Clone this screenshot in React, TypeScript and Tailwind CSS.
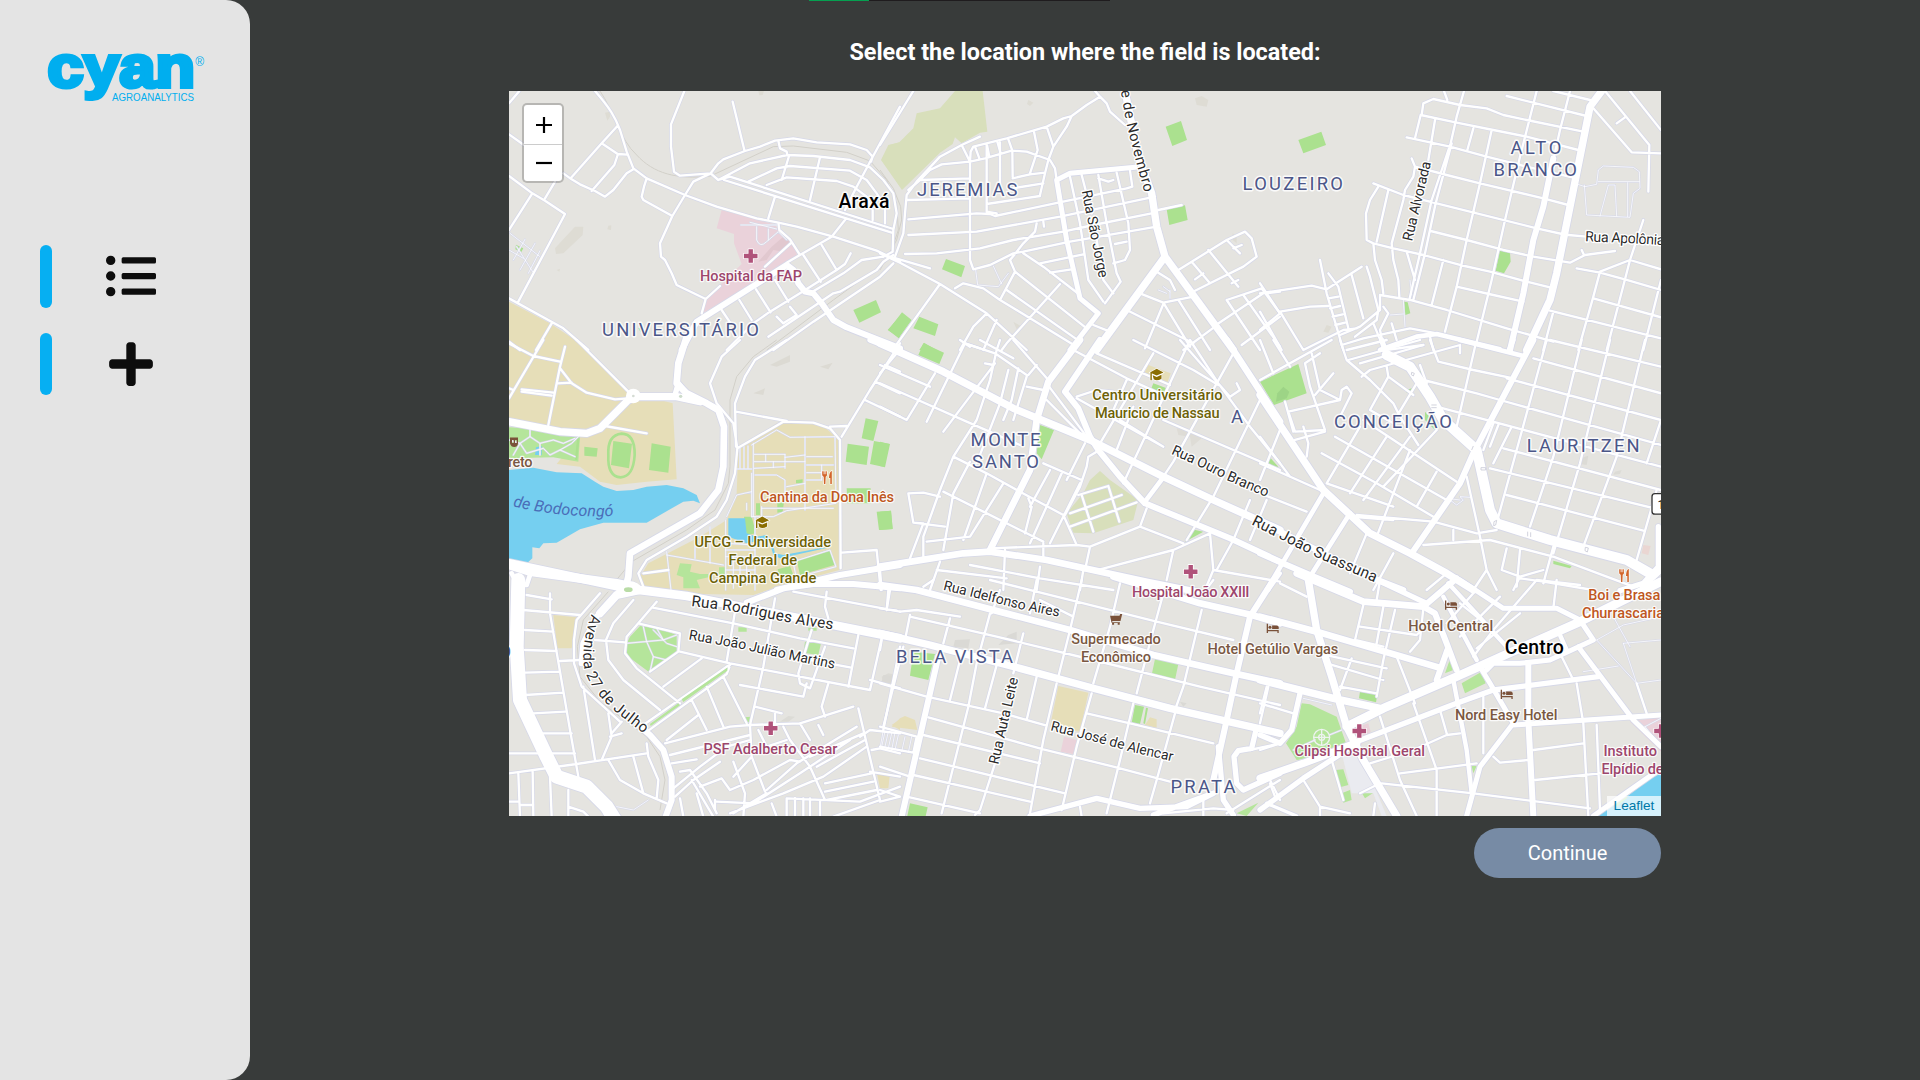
import { useId } from "react";
import { FaListUl, FaPlus } from "react-icons/fa";

type Tile = {
  x: number;
  y: number;
  areas?: [string, string][];
  rail?: string;
  service?: string;
  minor: string;
  roads: [number, string][];
};

const GREEN = "#abe18f";
const PARK = "#b5e59b";
const SAND = "#e6deb8";
const PINK = "#ead2da";
const WATER = "#75cff0";
const OLIVE = "#d8dfbb";

// Each tile covers a 400px wide part of the map and is authored at three units per pixel.
const TILES: Tile[] = [
  {
    x: 500,
    y: 80,
    areas: [
      [PINK, "M665 390L820 432L870 480L890 510V535L860 550L608 700L617 657L725 552L702 490V462L650 445Z"],
      ["#e1c8cf", "M850 470L868 485L850 515L820 510L800 540L775 545L815 500Z"],
      ["#dedcd4", "M250 440L248 465L190 520L168 522L165 505L225 440ZM325 437L334 436L333 450L322 448ZM315 98L330 95V110L322 122ZM775 33H792L788 45L778 46ZM170 570L180 566L178 575Z"],
      [OLIVE, "M1200 187L1165 195L1143 240L1200 320Z"],
      [GREEN, "M1060 690L1128 660L1143 697L1078 728ZM1200 708L1163 750L1200 775ZM48 494L70 505L64 516L46 508ZM415 745L425 742L422 757Z"],
    ],
    rail: "M300 33C340 90 360 180 410 225C460 280 530 300 632 288L820 200L880 198L1040 217L1110 243L1160 300L1190 370L1195 450L1165 540L1000 660L800 810",
    service:
      "M30 460L120 530M50 500L98 575M40 540L75 478M60 570L105 490M85 580L120 512M27 510L70 535M722 435H830M750 427L830 447M770 440V480Q780 505 800 485L835 455L860 480M805 447V480",
    minor:
      "M27 70L58 33M27 163L72 195M285 33C330 85 345 110 360 150L380 215L400 265L440 295L555 345L650 380L770 415L835 428L890 440L1000 470L1130 512L1200 545M353 137L305 190L212 295M190 280L215 298L240 313L285 333L315 350L340 330L380 280L400 268M305 190L353 222L382 224M353 225L343 255L275 333M165 305L135 355M27 288L97 340L135 362L195 402L55 665M97 340L27 450M27 655L190 745L265 810M440 295L432 320L425 350L430 360L517 408M553 33L513 133V200L522 275L540 287L632 280L655 250L670 238L735 213L780 200L825 182L880 175L950 187L1050 193L1100 210L1118 230L1113 245M698 65L733 210M835 182L840 205L860 215L862 225L940 228L1050 240L1110 262L1150 300L1180 340L1190 400L1180 450L1178 515L1150 530M632 280L655 300L750 250L862 225M632 280L580 305L555 345L517 408L480 490L483 530L495 540L515 580L530 615L617 657L605 700M655 300L690 290L1180 447M672 300L1175 458M745 305L830 265L870 258L1050 272L1100 300L1130 340L1155 380V430M800 315L860 292L1010 303L1060 320L1100 350L1118 390V420M868 225L845 300M825 350L805 415M960 232L930 360M1200 80L1113 240L1065 330L1035 390M1035 420L995 470L905 522L860 548M835 428L838 450L870 478L900 525M795 560L875 487M617 657L660 618M665 690L690 727M718 660L755 720M768 628L812 697M825 600L865 665M910 525L962 605M965 495L1010 570M1052 520L1035 552L1010 570L900 640L810 695L760 730L680 810M830 710L850 730L890 705L870 680M805 770L1000 640L1020 635L1130 570L1150 545L1180 525M820 810L940 725L1140 590L1180 550M930 640L1030 580L1085 540L1150 530M155 730L108 810M27 785L60 810",
    roads: [
      [18, "M545 810L590 725L860 555L880 570L895 610L915 635L940 640L965 670L1000 720L1040 742L1200 805"],
    ],
  },
  {
    x: 880,
    y: 80,
    areas: [
      [OLIVE, "M225 33H308L322 155L300 158L245 190L225 172L218 192L180 218L66 330L5 240L30 195L58 187L100 145L110 100L180 85Z"],
      ["#dedcd4", "M945 55L965 48L985 60L980 80L950 75ZM445 60L460 68L450 78L441 72ZM400 725L422 738L410 748ZM1058 460L1070 470V490L1058 480Z"],
      [GREEN, "M857 140L903 123L921 180L877 198ZM860 388L915 376L923 420L868 435ZM198 537L255 558L244 592L186 568ZM66 697L95 720L56 775L25 750ZM118 710L175 733L165 768L100 745ZM132 788L170 810H118Z"],
    ],
    rail: "M0 270L40 325L62 380L65 420L50 480L0 570",
    service: "M287 570L293 615L355 620L385 580M340 558L365 612M850 620L870 635M835 630L860 640M870 630V655",
    minor:
      "M0 195L100 33M300 170L245 195L180 230L110 305L80 345L75 400L70 460L45 530M85 330L120 300L150 270L185 253L270 245L315 235L395 212L440 215L510 240L525 265L530 300M270 245L272 215L280 200L380 175L500 140L550 115L575 108L620 75L660 50L645 33M660 50L680 70L690 95L735 135M575 108L560 140L520 200L505 240L495 280L480 345M245 195L270 245V540L280 568L330 555L400 520L430 515L570 485L830 440M500 140L520 200M462 155L473 210L450 280M397 212L398 290M360 187V325M320 190V395L350 400M285 200L298 235M320 190L328 230M352 185L362 220M385 178L397 212M120 300L270 295M398 295L450 283L495 278M398 325L490 310M320 372L480 348M80 360L270 355M85 418L290 400L330 402L345 408L535 368L740 325M85 465L290 455L540 410L825 350M75 522L170 520L300 505L400 480L550 455L640 435L830 397M470 430L465 455L430 490L405 522L390 540L405 575L360 660M490 425L492 440M480 550L610 523M510 578L575 568M430 520L490 560L600 645M570 290L600 430L625 600L670 665M605 285L635 400M650 480L670 600L700 640M655 285L680 430L710 580L722 605L675 670M710 278L745 430L750 510L735 540L700 550M750 272L757 320L740 325M655 295L685 305L700 300M705 492L740 485M835 390L905 375M30 530L150 565M0 520L60 548L180 612L320 700L440 810M180 612L45 800M225 625L250 610L310 625L360 660L590 800M380 630L600 785M405 575L620 745M540 612L380 790L365 810M320 700L280 740L240 810M350 720L310 810M255 790L300 805M640 735L690 755M740 690L940 790M780 640L850 668L940 650M850 672L795 805M850 668L930 800M895 660L990 810M1005 740L910 810M830 575L870 600L885 630M895 570L1040 480L1095 455L1115 475L1130 530L1090 560L990 610L930 640M985 510L1075 620M1040 480L1080 520M935 545L990 610M1060 505L1085 495M945 598L970 580M1055 610L1075 600M1040 660L1145 625L1200 700M1090 645L1200 800M1000 740L1150 640M1085 795L1200 710M1160 640L1200 635M1040 660L1140 810",
    roads: [
      [15, "M765 262L570 280L530 300L560 480L600 655L655 700L570 810"],
      [22, "M735 33L775 230L815 340L830 440L855 530L1060 810M855 530L650 810"],
      [18, "M0 785L60 810"],
    ],
  },
  {
    x: 1260,
    y: 80,
    areas: [
      [GREEN, "M115 180L184 155L198 195L130 220ZM720 510L750 518L752 545L732 580L707 572ZM432 665L443 667L451 700L436 705Z"],
      ["#dedcd4", "M200 735L215 740L205 758L190 755Z"],
    ],
    service:
      "M950 312L975 320L1010 313L1015 270L1030 258L1120 262L1138 275L1140 325L1120 340L1110 412L980 405L973 315M1015 305H1138M1020 408L1045 315H1065L1070 408M1103 308V410M430 660L435 740M390 705L430 702M455 645L450 600",
    minor:
      "M830 33L780 230L735 420L695 600L650 785M930 33L900 150L880 240M695 150L660 310L620 480L590 620L555 755M612 33L590 110L572 190L515 360L480 520L448 660M575 190L527 370L495 520L460 660M640 145L622 210M525 120L505 240M550 540L515 675M455 235L465 260L460 290L435 330L430 360L395 490L400 540L415 600L418 650M385 330L350 485M340 310L430 345L530 370L830 445L920 465M355 320L330 360L318 400L320 480L340 490L400 505L490 525L600 555L690 575L800 605L870 622M340 490L345 540L365 600L370 640M440 515L465 600M360 645L450 660L560 690L740 745L880 785M485 105L490 70L520 57L600 75L680 85L730 105L800 120L970 155M482 105L465 175M482 105L590 128L700 150L800 170L955 210M440 172L570 200L680 230L800 260L950 295M465 260L560 285L660 310L850 355L925 375M552 33L562 60M740 48L980 108M880 33L990 60M512 453L620 480L730 510L820 530L930 548L975 525L1065 513M965 510L972 525M590 620L700 645L790 665M925 465L980 470M1000 85L1115 217L1203 220M1035 33L1168 195L1165 335M1070 130L1095 112M1110 33L1203 150M1150 420L1110 540L1020 575M950 565L1020 578L1100 600L1203 630M1020 575L1000 650L955 810M1110 540L1203 568M1110 540L1040 810M1000 655L1203 712M1203 600L1150 810M870 692L1203 775M880 695L850 810M0 640L155 617L200 628L305 560M205 580L235 620L265 745M180 540L200 640L250 810M275 585L310 715M320 560L330 590L355 690L350 720M205 655L235 650M210 685L240 678M218 710L248 703M226 735L255 728M240 765L300 740L360 690V645M285 770L350 720M245 795L310 775L450 745L530 760M130 810L250 750L290 745M60 695L150 680L205 678M0 750L60 700L0 610M60 695L130 810M0 695L65 810M370 680L385 700L360 750L370 800M395 730L410 780M340 730L365 790M510 770L520 810M365 812L490 795",
    roads: [
      [22, "M1025 33L990 80L960 230L910 480L890 580L870 660L800 810"],
      [18, "M880 235L850 380L820 480L790 640L750 810"],
      [14, "M360 810L470 770L530 762L720 808"],
    ],
  },
  {
    x: 500,
    y: 340,
    areas: [
      [SAND, "M27 -115L150 -50L225 0L385 155L518 190L530 418L440 425L350 435L300 425L240 380L170 372L235 290L27 240Z"],
      [SAND, "M715 325L830 250H960L1018 300L1020 500L1018 690L850 735L760 765L600 762L430 750L420 710L445 670L600 590L680 540L710 460Z"],
      [PARK, "M27 262L90 265L240 290L235 365L160 352L27 355Z"],
      [GREEN, "M340 303L396 311L387 385L333 375ZM455 310L512 320L505 398L447 390ZM253 320L293 325L290 350L253 347ZM1097 235L1135 243L1120 303L1085 295ZM1043 311L1107 320L1100 375L1037 365ZM1122 303L1170 312L1155 382L1110 372ZM1040 445H1112V490H1042ZM1130 515L1173 512L1178 567L1137 570ZM890 660L990 628L1003 675L900 705ZM833 688L870 678L880 705L840 717ZM732 530H755L768 580L740 585ZM768 490H780V525H768ZM832 488L852 485L848 515L832 518ZM888 420L908 418V430H888Z"],
      [PARK, "M540 670L575 673L570 695L600 702H625V712L590 720L600 745H550V712L530 705ZM657 682H675V712H657Z"],
      ["#dcdad3", "M810 75L870 45L870 65L830 80ZM960 80L998 68L985 88ZM760 160L795 145L790 165Z"],
      [WATER, "M27 390L100 383L170 397L245 400L285 425L310 440L350 453L400 450L440 440L500 435L550 445L590 465L600 490L580 482L550 485L440 548H310L240 568L170 608L130 610L118 625L97 622V655L75 675L27 660ZM685 535H735L740 580L770 590L800 585L815 600L825 640L850 645L960 625L990 622L840 655L820 645L810 610L790 600L740 610L685 590ZM108 322L125 318V345H105Z"],
    ],
    rail: "M830 0L760 50L710 110L690 180L690 380L685 430L645 510L560 570L395 665L345 725",
    service:
      "M755 315L830 270L870 292L1005 290L1008 490L860 512L820 530H755M760 310V530M915 290V510M763 343H855M763 365H915M763 385L855 380M855 343V385M797 343V365M820 365V383M855 352L915 345M920 350H997M920 375H1000M920 398H965M920 420H965M965 375V420M765 405H830L855 420V470H910M860 440L915 430M720 325V385M732 320V385M744 318V385M710 387H755M755 400V530M755 455L710 465L680 530M785 500V530M785 505H1000M677 540V750M677 630H765M677 650H765M765 530V750M677 610L765 615M630 560V670M585 590V655M500 635L513 750M500 645L670 675M880 665L990 630L1008 680L890 712ZM700 650V745M720 650V740M740 650V735M740 490V510M677 690H765M677 715H765M27 300L60 310L90 290L120 310L160 300L190 310L225 295M60 310L80 340L130 325L150 345L180 330L225 350M90 265V290M120 310V345M40 345L60 310M180 330L215 310L235 290",
    minor:
      "M230 0L385 155M130 0L27 175M27 10L100 48L180 65M195 20L180 80L145 255M180 85L215 130L260 158L345 178L385 175M172 130L215 128M65 148L160 158M65 155L155 167M27 145L40 150M315 258L440 280M720 0L665 50L630 130L650 190L700 250L712 325L705 400L680 480L650 530L560 590L440 660L415 700L430 740M860 0L765 60L735 110L705 190L708 320M708 215L860 243M712 325L850 245L940 248L990 265L1020 300L1022 685M990 260L1040 258M1200 10L1110 150L1025 290M1155 75L1200 95M1125 125L1200 160M1095 180L1200 230M1025 638L1130 630L1142 750M430 700L505 690",
    roads: [
      [20, "M560 -10L535 70L530 130L560 160L620 190L655 210L672 260L670 380L655 450L600 520L390 640L385 710L375 750"],
      [22, "M600 185L530 170L410 170L385 180L345 220L300 265L260 280L180 275L27 245"],
      [26, "M27 675L90 695L350 730L400 740"],
      [16, "M1110 0L1200 35M525 165L535 130L560 160"],
      [14, "M35 700L50 730L80 735L90 705"],
    ],
  },
  {
    x: 880,
    y: 340,
    areas: [
      [OLIVE, "M630 420L660 393L690 420L775 480L760 540L640 580L580 578L560 520L610 460Z"],
      [SAND, "M805 75L872 100L860 135L790 105Z"],
      [GREEN, "M130 10L192 38L178 72L115 45ZM480 255L522 270L485 358L470 340ZM0 305L28 312L12 380L0 378ZM820 130L860 145L850 165L810 155ZM935 568L970 575L915 605ZM0 515L33 512L38 567L0 570ZM1172 355L1195 380L1168 372Z"],
      ["#dedcd6", "M890 265L930 270L965 295L935 320L930 290L895 285Z"],
    ],
    minor:
      "M50 40L0 100M255 10L140 245M345 70L190 275M350 30L330 120L290 240L220 350L180 450L130 590V650M385 90L360 190L290 370M415 85L395 180L370 240M440 110L400 240M445 105L470 75M440 140L490 150M255 10L345 40L440 105M350 30L360 0M300 0L400 55M400 0L505 120M0 75L150 140M0 130L80 165L260 245L420 315M0 200L80 240L165 100M315 70L340 75M500 130L620 290M500 180L600 280M220 350L320 400L420 455L550 525M190 455L310 515L440 580L490 605M320 400L250 600M270 365L220 460L190 630M370 430L270 590L140 605M85 460L100 548L195 560M85 460L130 458L180 470M100 548L130 550L90 655M445 475L455 500L435 580M510 390L450 500M545 400L450 610M600 430L510 610M550 525L590 615L330 625M615 310L560 420M650 335L625 350L620 380L600 440L555 525M490 370L605 420M590 615L630 620L780 560L800 505M780 560L910 610M630 620L615 690M490 610V650M375 630L370 750M655 690L880 630L990 580L1000 690L975 750M880 630L860 720M1000 690L1200 725M595 465L685 438L718 545M605 465L640 575M570 520L725 465M570 560L770 487M580 30L740 115L860 170M650 40L870 135M760 0L940 90L1015 135M820 40L660 310M740 120L700 210M590 175L850 320M930 0L800 280L730 430M1060 40L880 365L850 410M1140 180L1000 470L920 600M850 240L1200 390M930 0L1015 130L1110 260L1200 370M900 0L1050 170L1080 150L1070 130M720 240L850 320M760 200L710 330M590 170L650 150L700 155M1110 480L1060 600L1010 690M1160 480L1110 600M240 0L270 20M270 675L480 715L700 750M180 665L150 750M480 680L470 750M610 690L600 750M0 690L5 750M170 690L380 715",
    roads: [
      [22, "M0 10L190 95L400 205L630 300L850 410L1000 480L1200 570"],
      [20, "M600 0L505 125L470 240L450 390L330 630"],
      [18, "M660 0L555 155L595 205L630 290L655 330L720 410L795 490L1050 595L1200 665"],
      [20, "M1040 0L1200 245"],
      [14, "M795 485L850 412"],
      [20, "M0 680L250 640L330 635L500 660L800 725L950 755"],
      [12, "M1200 700L1165 750"],
    ],
  },
  {
    x: 1260,
    y: 340,
    areas: [
      [GREEN, "M0 125L115 72L140 160L42 195ZM28 355L55 382L25 375ZM495 215L530 255L525 270L495 240ZM880 662L935 678L930 685L880 672ZM440 150L455 145L458 158L440 158ZM480 90L495 110L480 108Z"],
      ["#9dd486", "M70 140L88 155L80 175L48 185L52 160Z"],
      ["#ead6d2", "M1150 615L1172 618L1165 645L1145 640Z"],
      ["#dcdbd6", "M960 355L985 347L980 375L960 372ZM1065 395L1085 390L1080 402L1060 404Z"],
    ],
    service: "M570 480L590 495L610 480L600 470L630 472M560 475L600 480",
    minor:
      "M870 0L1203 80M820 55L1203 160M740 115L1203 240M720 180L1203 315M530 200L1203 380M730 325L1203 450M690 385L1203 510M740 465L1150 572M860 0L770 330L715 530M965 0L880 350L810 560M1050 0L960 370L880 640M1155 0L1070 350L970 620M1203 240L1160 370M1190 450L1130 660M645 20L590 260M490 120L650 160L720 180M510 0L535 65L640 90L760 115M240 0L260 60L330 120L400 190L420 230L475 315M260 30L380 0M265 60L480 0M300 70L490 15M305 110L330 90L600 15V40M380 80L385 110L460 165M385 110L330 210M470 130L410 230M480 75L500 130M180 40L135 70L150 140L195 270L105 275L85 215L240 180L245 150L260 140L275 160L240 230M155 40L180 150L240 180M220 100L165 165M75 185L100 275M105 300L195 275M130 260L145 310L140 350M0 120L215 0M60 270L0 420M0 370L180 450M0 290L90 410M185 340L350 430L520 530M225 290L560 480M330 210L400 250M310 240L590 425M200 430L400 500M300 260L200 430M380 290L270 460M450 290L310 480M530 270L370 440M530 395L470 500M450 330L350 590M620 410L660 590L680 690L640 750M680 690L710 750M290 525L520 545L650 580L710 570M270 530L400 540M490 615L690 600L880 650L1120 740M580 570V600M740 625L725 690L780 710L760 750M880 620L850 730M780 630L770 740M700 250L670 330M715 255L690 320M755 260L700 370M780 715L850 725L1000 750M400 640L340 750M320 580L270 700M0 460L140 515M560 700L500 750M40 0L90 80M0 0L40 100M780 710L850 690",
    roads: [
      [22, "M0 165L190 450L330 580L450 640L560 700L640 750"],
      [18, "M820 0L640 340L600 430L455 640"],
      [30, "M380 45L450 80L510 170L550 240L650 330L690 510L710 550L870 600L1100 660L1170 700"],
      [16, "M365 0L380 45M1195 560V680L1150 730L1080 752M1203 690L1150 740"],
      [14, "M600 0L790 48M760 0L745 35M190 460L20 750M270 520L150 710V750"],
      [18, "M-30 530L340 715L430 750M0 640L150 705L270 755"],
    ],
  },
  {
    x: 500,
    y: 580,
    areas: [
      [SAND, "M160 105L230 112L215 205L172 205ZM1130 575L1170 580L1160 625L1140 625ZM1175 435L1200 418V450Z"],
      [PARK, "M420 138L475 145L530 165V215L450 278L385 230L375 200L390 170ZM915 185L963 190L955 225L910 218ZM715 142H740V155H715ZM735 412L752 410L745 430L732 428ZM925 143L950 143V152H925Z"],
      ["#dcdbd6", "M1145 290L1165 280L1190 285V308H1150ZM840 425L865 408L885 410L865 425Z"],
    ],
    rail: "M325 35L250 120L232 200L240 290L300 365L440 470L480 530L495 600L480 690",
    service:
      "M380 190L490 180L530 165M430 140L440 185L460 230L450 275M460 150L500 190L530 200M490 180L470 145M460 230L500 240M350 680L400 690L445 660M1150 450L1140 505M1165 455L1155 500M1185 458L1175 510",
    minor:
      "M75 150L160 155M70 90L240 105M80 45L155 58M150 40V100L210 450L235 590M75 210L170 213M75 278L180 275M75 345L190 338M100 400L195 395M120 460H215M27 520H225M27 580L230 552L440 520M55 580L60 710M98 575L100 710M150 590L155 710M27 665H55M60 675H100M205 630V710M205 680L250 695L265 710M180 243L240 240M250 320L285 540M325 400L335 470L305 540M335 460L365 425M330 470L365 460M300 40L230 120L222 180V250L245 320L360 425M400 60L340 130L318 180L325 240L370 300L480 390M470 65L380 170L375 220L410 265L540 370M285 180L375 187M455 82L700 130L900 175L1060 205M415 130L540 160L535 215L450 275M540 215L690 250L1110 330L1145 175M605 235L490 320M690 255L680 260L430 435M688 262L680 282L445 452M670 290L740 430M620 320L670 440M575 360L620 450M595 405L500 480M495 490L690 440L750 435L900 430L1060 380M825 55L790 260L750 435L755 530L795 635M705 95L680 245M720 315L910 350L920 310M1075 165L1045 320M935 150L895 280L900 310L930 325L975 200M980 35L975 80L985 115M1165 30L1160 90M985 310L965 380L975 410M1200 200L1150 450M1110 300L1200 325M930 240L1050 262M880 35L1200 95M765 380L845 400M825 400V435M775 450L800 500L860 480M440 490L445 530L475 600L470 655M325 540L360 600L430 640L500 670M400 530L430 640M900 430L930 480M850 440L870 480L930 560L975 660M955 435L970 465M1075 385L1140 660M510 525L750 465M515 550L590 538M520 625L600 560L680 500L750 480M525 650L580 600L660 545M540 575L570 570L620 640L650 700M575 600L640 710M600 620L665 595L690 630L760 600L870 540L900 545M650 665L760 670L900 580L1050 480M700 545L735 640L730 710M755 530L700 590M800 630L890 550L1070 440M645 690V660M690 700L850 640L970 590L1100 500M930 530L1090 460M950 560L1095 480M975 610L1115 580M975 635L1120 605M980 660L1130 630M860 655L1080 665L1200 620M860 655V710M885 655V710M910 655V710M930 655V710M960 665V710M1080 470L1110 450L1200 460M1115 510L1140 505L1200 520M1110 575L1200 590M1000 710L1140 660M800 640L700 700M540 655L550 710M590 640L610 710M815 670L830 710",
    roads: [
      [42, "M55 0L50 200L60 360L140 530L170 590L260 620L320 680L345 720"],
      [26, "M27 -50L380 25L560 48L1200 175"],
      [18, "M740 68L850 25L940 12L1060 12L1200 25M830 30L1020 -15L1200 -45"],
      [24, "M420 30L350 45L300 100"],
      [18, "M290 110L250 190L245 250M420 440L450 465L490 510L515 590V660L495 715"],
    ],
  },
  {
    x: 880,
    y: 580,
    areas: [
      [SAND, "M535 318L625 338L600 455L510 440ZM810 412L830 418V443L795 435ZM75 408L105 420L112 450L35 440L60 415ZM0 575L30 580L25 625L0 620Z"],
      [PINK, "M552 470L590 480L580 522L542 515Z"],
      [GREEN, "M100 215L165 222L145 300L90 287ZM765 375L792 380L780 432L755 428ZM798 383L804 385L795 432L790 430ZM90 670L143 682L137 708H82Z"],
      [PARK, "M825 237L895 252L885 300L815 285ZM1135 668L1100 708L1070 700Z"],
      ["#dad9d5", "M225 180L270 178L265 205L220 200ZM385 165L410 155V190L355 195ZM10 285L38 288L35 312L5 305ZM900 365L920 370L910 380Z"],
    ],
    service: "M15 455L5 500M35 460L25 505M55 465L45 510M75 470L65 515M95 470L85 518",
    minor:
      "M60 95L110 90L240 110M0 85L50 92M90 110L350 170L640 240L960 320L1200 375M30 30L20 90M90 105L75 180M0 310L140 350L370 400L500 437M145 412L490 508L700 560L870 605M130 465L480 550M120 535L555 640M100 585L450 665M80 650L300 700M210 115L190 190M330 100L290 250L265 380L185 700M240 240L210 360M350 255L315 385M470 290L440 420M530 310L490 480L450 700M635 340L590 500L545 690M760 370L720 540L680 700M885 400L830 600L810 670M430 160L400 280M345 550L300 690L285 705M360 30L335 100M605 0L570 150L535 290M720 10L690 140L640 310M850 40L820 150L770 340M965 90L910 320L885 390M470 0L450 100M330 0L590 65L830 125L1060 180M620 400L750 430L1000 490M480 60L580 110M1165 320L1140 430M1110 510L1200 490M1040 700L1200 600M1170 600L1200 660M850 700L1000 685L1060 690M0 440L110 470L100 518L0 500M0 560L90 590M70 200L10 440M5 180L0 210M600 680L605 710M970 660V710M0 665L60 650L0 630M130 20L160 0M1000 0L985 20",
    roads: [
      [20, "M0 15L110 30L570 150L820 225L1060 280L1200 310M700 -10L960 70L1115 105L1200 130"],
      [22, "M0 160L150 195L420 265L640 325L870 385L1200 460"],
      [18, "M175 230L120 470L65 710M1180 0L1110 110L1070 280L1040 420L1000 600"],
      [16, "M1200 580L1090 630L1070 610L1062 530L1075 512L1115 505L1128 450M1015 500L1030 660L1060 705M1000 640L820 705M450 708L650 655L780 685L920 680L1000 640"],
    ],
  },
  {
    x: 1260,
    y: 580,
    areas: [
      [PARK, "M125 370L150 373L230 410L258 490L240 520L110 540L78 490L110 440ZM605 310L665 275L677 310L615 340ZM228 570L250 568L265 615L240 622ZM245 640L270 630L275 660L250 668ZM300 630L340 612L345 635L315 655ZM570 238L580 270L555 280ZM635 558H650L640 580Z"],
      [GREEN, "M300 335L352 345L348 367L297 355Z"],
      [PINK, "M1110 425L1203 410V515ZM295 440L325 430L332 455L300 500Z"],
      ["#eaebf0", "M245 520L300 535L335 600L380 708H365L340 640L275 640Z"],
      [WATER, "M1203 580L1165 600L1100 650L1000 708H1203Z"],
      [PARK, "M1060 670L1105 640L1100 655L1070 680Z"],
    ],
    service:
      "M1060 110L1110 200M1010 180L1130 310L1203 300M1090 190L1130 310M1203 110L1090 135L1010 180M1203 180L1090 190M970 275L1075 258M130 355L215 375M208 465L245 450M165 480L100 510M1155 440L1203 415M1155 440L1180 470",
    minor:
      "M0 60L40 0M60 10L140 50M360 0L350 60M310 75L285 180L370 200M370 80L350 190M405 90L370 240L350 350M300 140L470 165L485 150M490 85L480 180L450 215M410 230L465 370M275 235L240 330M175 220L380 265M200 250L370 300M240 320L350 340M650 110L600 70M560 130L640 40M600 170L720 50M640 230L700 150L830 0M880 85L890 0M780 100L650 205M830 0L960 15M950 310L970 430L985 708M1010 435L1020 690M900 220L940 300M1130 310L1160 400M820 510L970 490M825 600L1020 580M640 640L990 685M365 610L640 640M420 580L650 550M360 410L420 600L470 708M330 550L460 510L560 465L600 460M460 370L530 570V708M540 390L560 460M700 530L720 548L805 540M670 350V520M0 370L100 400M20 320L0 400M130 600L180 680V708M180 680L270 700M30 610L45 650M345 670L340 708M0 510L60 490M360 610L300 640M215 540L250 660",
    roads: [
      [26, "M1203 5L960 125L780 205L590 290L370 385L260 440"],
      [22, "M145 0L170 150L215 290L260 440L310 540L410 708M0 300L220 355L360 385M0 595L130 550L290 490"],
      [20, "M0 110L170 155L535 262M110 -20L310 65L490 80"],
      [16, "M330 -10L500 70M250 500L590 370L700 330L1015 290M120 340L95 450L60 490L0 465M0 690L130 595L260 510"],
      [18, "M490 80L560 20L590 -5M490 80L525 100L560 190L590 270M562 210L530 300M805 255V420L820 708"],
      [13, "M550 50L650 240M565 10L740 200M580 300L620 510L635 640M900 165L920 210"],
      [15, "M600 0L730 85H890L960 120L1000 180L870 240L780 250H700L680 270M955 200L1120 420L1203 500M760 435L1203 405M660 260L690 310L760 430L660 560L620 708M1000 708L1203 565"],
      [10, "M20 670L110 708"],
    ],
  },
];

function tileTransform(t: { x: number; y: number }) {
  return `translate(${t.x} ${t.y}) scale(0.33333)`;
}

function Label({
  x,
  y,
  w,
  size = 14.6,
  color,
  weight = 500,
  children,
}: {
  x: number;
  y: number;
  w: number;
  size?: number;
  color: string;
  weight?: number;
  children: string;
}) {
  return (
    <text
      x={x}
      y={y}
      textLength={w}
      fontSize={size}
      fontWeight={weight}
      fill={color}
      stroke="#fff"
      strokeWidth={size > 16 ? 3 : 2.4}
      strokeOpacity={0.85}
      strokeLinejoin="round"
      paintOrder="stroke"
    >
      {children}
    </text>
  );
}

function District({ x, y, w, children }: { x: number; y: number; w: number; children: string }) {
  return (
    <Label x={x} y={y} w={w} size={18.4} weight={400} color="#4b5688">
      {children}
    </Label>
  );
}

function Street({
  tx,
  ty,
  d,
  w,
  size = 43,
  color = "#2b2b2b",
  italic = false,
  halo = true,
  children,
}: {
  tx: number;
  ty: number;
  d: string;
  w: number;
  size?: number;
  color?: string;
  italic?: boolean;
  halo?: boolean;
  children: string;
}) {
  const id = useId();
  return (
    <g transform={tileTransform({ x: tx, y: ty })}>
      <path id={id} d={d} fill="none" />
      <text
        fontSize={size}
        fill={color}
        fontStyle={italic ? "italic" : "normal"}
        stroke={halo ? "#fff" : "none"}
        strokeWidth={8}
        strokeLinejoin="round"
        paintOrder="stroke"
        textLength={w}
      >
        <textPath href={`#${id}`} textLength={w}>
          {children}
        </textPath>
      </text>
    </g>
  );
}

function Cross({ x, y }: { x: number; y: number }) {
  return (
    <path
      transform={`translate(${x} ${y})`}
      d="M-2.2-6.8h4.4v4.6h4.6v4.4h-4.6v4.6h-4.4v-4.6h-4.6v-4.4h4.6z"
      fill="#b0527a"
      stroke="#fff"
      strokeWidth="1.6"
      strokeLinejoin="round"
      paintOrder="stroke"
    />
  );
}

function Cap({ x, y }: { x: number; y: number }) {
  return (
    <g transform={`translate(${x} ${y})`} fill="#8a6d00" stroke="#fff" strokeWidth="1.2" paintOrder="stroke">
      <path d="M-6.8-2L0-5.8 6.8-2 0 .9zM-4 .6L0 2.3 4.8.2V4.2Q0 7-3 4.6zM-6.3-1.5h1.4V5.6h-1.4z" />
    </g>
  );
}

function Fork({ x, y }: { x: number; y: number }) {
  return (
    <path
      transform={`translate(${x} ${y})`}
      d="M-4.8-6v3.5q0 1.6 1.5 2L-3 6.6h1.4L-1.3-.5Q0-1 0-2.5V-6h-.8v3h-.7v-3h-1v3h-.8v-3zM4.8-6.6Q2-5 2 .6h1.3v6h1.5z"
      fill="#d2642a"
      stroke="#fff"
      strokeWidth="1.2"
      paintOrder="stroke"
    />
  );
}

function Bed({ x, y }: { x: number; y: number }) {
  return (
    <g transform={`translate(${x} ${y})`} fill="#7a5139">
      <path d="M-6-4.5h1.3V1.7H6v3H4.7V3H-4.7V4.7H-6z" />
      <circle cx="-2.7" cy="-1" r="1.5" />
      <path d="M-.6-2.8H4.5Q6-2.5 6-.8V.8H-.6z" />
    </g>
  );
}

function FieldMap() {
  return (
    <svg className="block h-full w-full" viewBox="509 91 1152 725" fontFamily="Roboto, sans-serif">
      <rect x="509" y="91" width="1152" height="725" fill="#e5e4e0" />
      {TILES.map((t, i) => (
        <g key={i} transform={tileTransform(t)}>
          {t.areas?.map(([c, d], j) => (
            <path key={j} d={d} fill={c} />
          ))}
          {t.rail && <path d={t.rail} fill="none" stroke="#d2d0c9" strokeWidth="3" />}
        </g>
      ))}
      <g transform="translate(500 340) scale(0.33333)" fill="none" stroke={GREEN} strokeWidth="8">
        <path d="M325 345Q322 285 365 281Q405 282 404 345Q400 410 362 412Q322 410 325 345Z" />
        <path d="M235 295L228 360" strokeWidth="7" />
      </g>
      <g fill="none" strokeLinecap="round" strokeLinejoin="round" stroke="#d6d8e8">
        {TILES.map((t, i) => (
          <g key={i} transform={tileTransform(t)}>
            {t.service && <path d={t.service} strokeWidth="6" />}
            <path d={t.minor} strokeWidth="11" />
            {t.roads.map(([w, d], j) => (
              <path key={j} d={d} strokeWidth={w + 5} />
            ))}
          </g>
        ))}
      </g>
      <g fill="none" strokeLinecap="round" strokeLinejoin="round" stroke="#fff">
        {TILES.map((t, i) => (
          <g key={i} transform={tileTransform(t)}>
            {t.service && <path d={t.service} strokeWidth="3" strokeOpacity="0.75" />}
            <path d={t.minor} strokeWidth="7" />
            {t.roads.map(([w, d], j) => (
              <path key={j} d={d} strokeWidth={w} />
            ))}
          </g>
        ))}
      </g>
      <g transform="translate(500 340) scale(0.33333)">
        <circle cx="400" cy="168" r="22" fill="#fff" />
        <circle cx="400" cy="168" r="4" fill="#d5dcd4" />
        <circle cx="542" cy="169" r="5" fill="#cddccb" />
        <ellipse cx="385" cy="745" rx="38" ry="22" fill="#fff" />
        <ellipse cx="385" cy="749" rx="13" ry="7" fill="#b9dca6" />
      </g>
      <g transform="translate(500 580) scale(0.33333)" fill={PARK}>
        <path d="M682 263L545 358L550 366L682 272ZM450 432L535 370L540 376L452 438Z" />
      </g>
      <g transform="translate(1260 580) scale(0.33333)" fill="none" stroke="#eef3f0" strokeWidth="4">
        <circle cx="185" cy="472" r="24" />
        <circle cx="185" cy="472" r="9" />
        <path d="M161 472H209M185 448V496" />
      </g>
      <g transform="translate(1260 340) scale(0.33333)" fill="none" stroke="#c9cad6" strokeWidth="2.5">
        <path d="M455 97l8 3-3 8-6-4zM514 195h16M514 203h16M640 318l-5 12M663 383h14v7h-14zM702 545l8-4-3 14-6 2zM803 575v14M812 577v14M976 622l9 2-3 12-7-4z" />
      </g>

      <Cross x={750.7} y={256} />
      <Cross x={1190.7} y={571.7} />
      <Cross x={770.7} y={728.3} />
      <Cross x={1359.3} y={731} />
      <Cross x={1661} y={731} />
      <Cap x={762.3} y={522.3} />
      <Cap x={1156.7} y={374.6} />
      <Fork x={827} y={477.3} />
      <Fork x={1624} y={575.3} />
      <Bed x={1451} y={605} />
      <Bed x={1272.7} y={628.3} />
      <Bed x={1506.7} y={694.3} />
      <path
        transform="translate(1115.7 619.3)"
        d="M-5.6-3.5H3.8L4.5-5.2H6.5L4.8 1.8H-3.5L-3.3 2.7H4.2V3.5H-4.2zM-3.6 3.7h2v1.7h-2zM2 3.7h2v1.7H2z"
        fill="#7a5139"
      />
      <path
        transform="translate(513.5 442)"
        d="M-3.5-4.5h8V1.5Q4 5 .8 5Q-2.5 5-3.5 1.5zM-1.5-2v3H.2V-2zM1.5-2v3h1.7V-2z"
        fill="#7a5139"
        fillRule="evenodd"
      />

      <Street tx={880} ty={80} d="M722 32L739 130L764 230L797 350" w={314} size={44}>
        e de Novembro
      </Street>
      <Street tx={880} ty={80} d="M605 333L660 610" w={267}>
        Rua São Jorge
      </Street>
      <Street tx={1260} ty={80} d="M456 485L515 240" w={244}>
        Rua Alvorada
      </Street>
      <Street tx={1260} ty={80} d="M975 484L1080 488L1280 499" w={238}>
        Rua Apolônia
      </Street>
      <Street tx={500} ty={340} d="M38 499Q120 518 200 525T350 527" w={305} size={48} color="#4a6db8" italic halo={false}>
        de Bodocongó
      </Street>
      <Street tx={880} ty={340} d="M872 341L970 385L1040 420L1180 480" w={316}>
        Rua Ouro Branco
      </Street>
      <Street tx={1260} ty={340} d="M-27 553L70 602L165 650L370 738" w={410} size={46}>
        Rua João Suassuna
      </Street>
      <Street tx={500} ty={580} d="M573 78L690 92L800 114L890 132L1020 152" w={431} size={46}>
        Rua Rodrigues Alves
      </Street>
      <Street tx={500} ty={580} d="M565 178L720 206L860 237L1030 272" w={446} size={42}>
        Rua João Julião Martins
      </Street>
      <Street tx={500} ty={580} d="M275 102C252 165 240 240 260 287C278 330 310 362 343 392L440 468" w={436} size={45}>
        Avenida 27 de Julho
      </Street>
      <Street tx={880} ty={580} d="M188 29L300 57L420 87L560 115" w={358} size={42}>
        Rua Idelfonso Aires
      </Street>
      <Street tx={880} ty={580} d="M355 555L417 285" w={266}>
        Rua Auta Leite
      </Street>
      <Street tx={880} ty={580} d="M510 451L640 484L760 517L900 549" w={378} size={42}>
        Rua José de Alencar
      </Street>

      <District x={602} y={336.3} w={157}>UNIVERSITÁRIO</District>
      <District x={917} y={196.3} w={100.5}>JEREMIAS</District>
      <District x={1242.5} y={190} w={100.5}>LOUZEIRO</District>
      <District x={1510.4} y={154.2} w={51}>ALTO</District>
      <District x={1493.5} y={176.2} w={83.5}>BRANCO</District>
      <District x={970.5} y={446} w={70}>MONTE</District>
      <District x={972} y={468} w={67}>SANTO</District>
      <District x={1231} y={422.7} w={11}>A</District>
      <District x={1334} y={428.3} w={118}>CONCEIÇÃO</District>
      <District x={1526.7} y={452} w={113}>LAURITZEN</District>
      <District x={896} y={663} w={117}>BELA VISTA</District>
      <District x={1170.5} y={793} w={65}>PRATA</District>
      <District x={498.5} y={658} w={12}>O</District>

      <Label x={838.5} y={208.3} w={51} size={19.5} color="#000">Araxá</Label>
      <Label x={1504.8} y={654.3} w={59} size={19.5} color="#000">Centro</Label>

      <Label x={700} y={281} w={102} color="#9d466d">Hospital da FAP</Label>
      <Label x={1132} y={597} w={117.5} color="#9d466d">Hospital João XXIII</Label>
      <Label x={703.5} y={753.7} w={134} color="#9d466d">PSF Adalberto Cesar</Label>
      <Label x={1294.5} y={756} w={130.5} color="#9d466d">Clipsi Hospital Geral</Label>
      <Label x={1603.5} y={756} w={53.5} color="#9d466d">Instituto</Label>
      <Label x={1601.5} y={774.3} w={62} color="#9d466d">Elpídio de</Label>

      <Label x={508} y={466.7} w={24.5} color="#7a5842">reto</Label>
      <Label x={1071.2} y={644.4} w={89.7} color="#7a5842">Supermecado</Label>
      <Label x={1081} y={662.4} w={70} color="#7a5842">Econômico</Label>
      <Label x={1207.5} y={653.8} w={130.7} color="#7a5842">Hotel Getúlio Vargas</Label>
      <Label x={1408.3} y={630.5} w={85} color="#7a5842">Hotel Central</Label>
      <Label x={1455} y={720} w={102.5} color="#7a5842">Nord Easy Hotel</Label>

      <Label x={760} y={502.2} w={134} color="#bf5722">Cantina da Dona Inês</Label>
      <Label x={1588.3} y={600.4} w={72} color="#bf5722">Boi e Brasa</Label>
      <Label x={1582} y={618.2} w={82} color="#bf5722">Churrascaria</Label>

      <Label x={694.5} y={547.4} w={136.5} color="#6d6207">UFCG – Universidade</Label>
      <Label x={728.5} y={565.4} w={68.5} color="#6d6207">Federal de</Label>
      <Label x={709} y={583.4} w={107.3} color="#6d6207">Campina Grande</Label>
      <Label x={1092.3} y={400} w={130.3} color="#6d6207">Centro Universitário</Label>
      <Label x={1095} y={418} w={124.5} color="#6d6207">Mauricio de Nassau</Label>

      <rect x="1652" y="493.7" width="24" height="20.5" rx="3" fill="#fff" stroke="#333" strokeWidth="1.3" />
      <text x="1657.5" y="508.5" fontSize="12" fill="#222">1</text>
    </svg>
  );
}

function Sidebar() {
  return (
    <aside className="flex h-full w-[250px] shrink-0 flex-col rounded-r-3xl bg-[#e4e4e4]">
      <svg className="mt-[40px] ml-[40px] block h-[70px] w-[180px] overflow-visible" viewBox="40 40 180 70" fill="#00aeef" fontFamily="'Liberation Sans', Arial, sans-serif">
        <text x="47.5" y="87" fontSize="60" fontWeight="700" stroke="#00aeef" strokeWidth="4.2" textLength="147.5" lengthAdjust="spacingAndGlyphs">
          cyan
        </text>
        <text x="112" y="101" fontSize="10.4" textLength="82" lengthAdjust="spacingAndGlyphs">
          AGROANALYTICS
        </text>
        <text x="195.3" y="65.5" fontSize="12">®</text>
      </svg>
      <nav className="mt-[135px] flex flex-col gap-[25px] pl-[40px]">
        {[FaListUl, FaPlus].map((Icon, i) => (
          <a key={i} className="flex h-[62.5px] items-center">
            <span className="h-full w-3 rounded-full bg-[#06aff2]" />
            <span className="ml-[54px] flex w-[50px] justify-center text-[#0d0d0d]">
              <Icon size={50} />
            </span>
          </a>
        ))}
      </nav>
    </aside>
  );
}

export default function App() {
  return (
    <div className="flex h-[1080px] w-[1920px] overflow-hidden bg-[#383b3a] font-['Roboto',sans-serif]">
      <Sidebar />
      <main className="flex flex-1 flex-col pl-[259px]">
        <div className="ml-[300px] flex h-px w-[301px] bg-[#1f1c1e]">
          <div className="h-px w-[60px] bg-[#05a050]" />
        </div>
        <section className="flex w-[1152px] flex-col">
          <h1 className="flex h-[90px] items-center justify-center pt-[14px] text-[23.4px] font-bold text-white">
            <span className="whitespace-nowrap">Select the location where the field is located:</span>
          </h1>
          <div className="relative h-[725px] w-full overflow-hidden">
            <FieldMap />
            <div className="absolute top-[12px] left-[13px] flex h-[80px] w-[42px] flex-col rounded-[5px] border-2 border-black/20 bg-white bg-clip-padding text-black">
              <button className="flex flex-1 items-center justify-center border-b border-[#ccc] pt-0.5 pl-0.5">
                <svg width="16" height="16" viewBox="0 0 16 16" stroke="currentColor" strokeWidth="2.2">
                  <path d="M0 8H16M8 0V16" />
                </svg>
              </button>
              <button className="flex flex-1 items-center justify-center pl-0.5">
                <svg width="16" height="16" viewBox="0 0 16 16" stroke="currentColor" strokeWidth="2.2">
                  <path d="M0 8H16" />
                </svg>
              </button>
            </div>
            <div className="absolute right-0 bottom-0 flex h-5 w-[54px] items-center justify-center bg-white/70 font-['Liberation_Sans',sans-serif] text-[13.6px] text-[#0078a8]">
              Leaflet
            </div>
          </div>
          <button className="mt-3 flex h-[50px] w-[187px] items-center justify-center self-end rounded-full bg-[#778ba5] text-xl text-white">
            Continue
          </button>
        </section>
      </main>
    </div>
  );
}
